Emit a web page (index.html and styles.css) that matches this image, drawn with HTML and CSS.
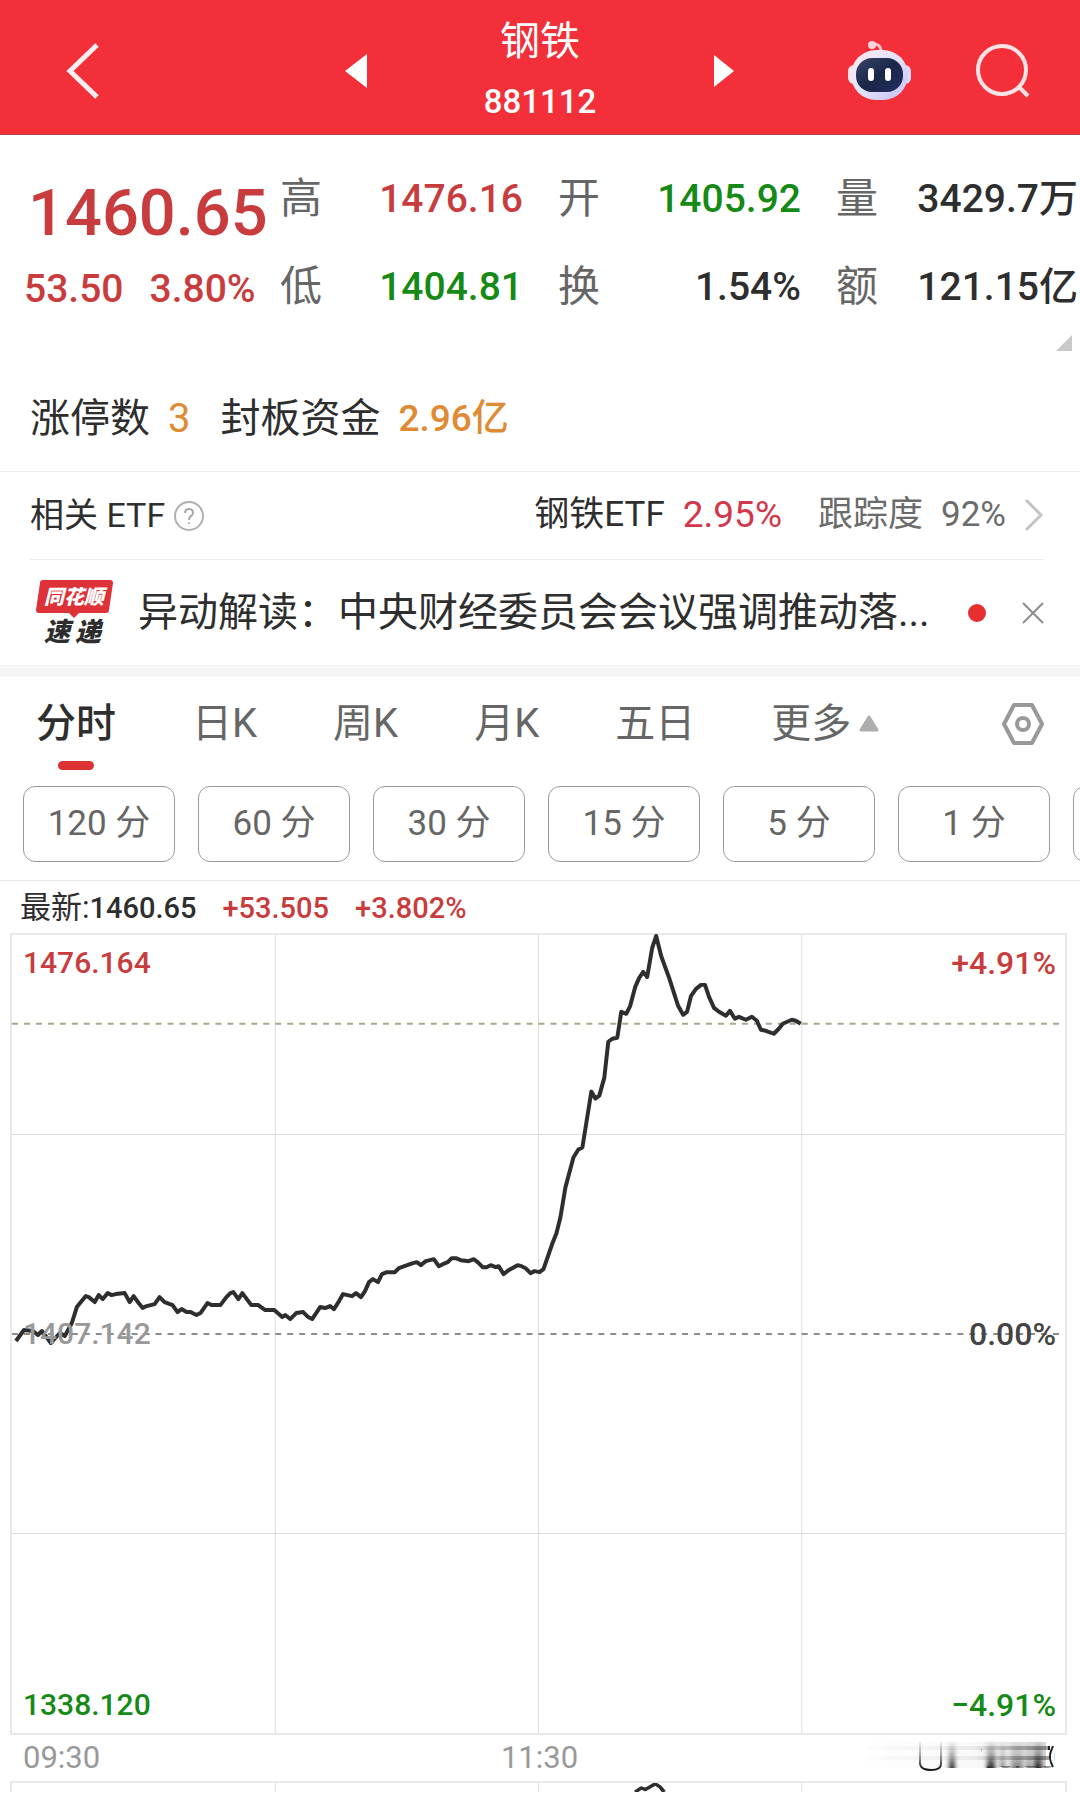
FILE: index.html
```html
<!DOCTYPE html>
<html lang="zh-CN">
<head>
  <meta charset="UTF-8">
  <meta name="viewport" content="width=device-width, initial-scale=1.0">
  <title>钢铁 881112</title>
  <link rel="stylesheet" href="styles.css">
</head>
<body>

<!-- Header -->
<header class="header">
  <button class="icon-btn back" type="button" aria-label="返回">
    <svg width="34" height="58" viewBox="0 0 34 58"><path d="M31 3 L4 29 L31 55" fill="none" stroke="#ffeff0" stroke-width="5"/></svg>
  </button>
  <div class="switcher">
    <button class="icon-btn" type="button" aria-label="上一个">
      <svg width="24" height="36" viewBox="0 0 24 36"><path d="M23 1 V35 L1 18 Z" fill="#fff"/></svg>
    </button>
    <div class="title">
      <h1>钢铁</h1>
      <p>881112</p>
    </div>
    <button class="icon-btn" type="button" aria-label="下一个">
      <svg width="24" height="36" viewBox="0 0 24 36"><path d="M2 2 V34 L22 18 Z" fill="#fff"/></svg>
    </button>
  </div>
  <div class="actions">
    <button class="icon-btn" type="button" aria-label="智能助手">
      <svg width="64" height="62" viewBox="0 0 64 62">
        <defs>
          <linearGradient id="shell" x1="0" y1="0" x2="1" y2="1">
            <stop offset="0" stop-color="#ffe9f0"/>
            <stop offset="0.5" stop-color="#e2e4fb"/>
            <stop offset="1" stop-color="#c3bdf3"/>
          </linearGradient>
          <linearGradient id="visor" x1="0" y1="0" x2="1" y2="1">
            <stop offset="0" stop-color="#39466a"/>
            <stop offset="0.5" stop-color="#1a2647"/>
            <stop offset="1" stop-color="#222d63"/>
          </linearGradient>
        </defs>
        <path d="M24 4 Q33 3 33 12" fill="none" stroke="#f9c9d2" stroke-width="3"/>
        <circle cx="24" cy="5" r="4" fill="#fbd3da"/>
        <rect x="0" y="25" width="12" height="19" rx="6" fill="#fbe0ea"/>
        <rect x="51" y="25" width="12" height="19" rx="6" fill="#e6d8f4"/>
        <rect x="3" y="10" width="57" height="50" rx="25" fill="url(#shell)"/>
        <rect x="8" y="18" width="47" height="34" rx="16" fill="url(#visor)"/>
        <rect x="20" y="28" width="6" height="13" rx="3" fill="#fff"/>
        <rect x="37" y="28" width="6" height="13" rx="3" fill="#fff"/>
      </svg>
    </button>
    <button class="icon-btn" type="button" aria-label="搜索">
      <svg width="54" height="56" viewBox="0 0 54 56"><circle cx="26" cy="27" r="24" fill="none" stroke="#ffe3e4" stroke-width="4"/><path d="M42 43 L52 53" stroke="#ffe3e4" stroke-width="4"/></svg>
    </button>
  </div>
</header>

<!-- Quote -->
<section class="quote">
  <div class="price up">
    <strong>1460.65</strong>
    <p><span>53.50</span><span>3.80%</span></p>
  </div>
  <dl class="stats">
    <div><dt>高</dt><dd class="up">1476.16</dd></div>
    <div><dt>开</dt><dd class="down">1405.92</dd></div>
    <div><dt>量</dt><dd>3429.7万</dd></div>
    <div><dt>低</dt><dd class="down">1404.81</dd></div>
    <div><dt>换</dt><dd>1.54%</dd></div>
    <div><dt>额</dt><dd>121.15亿</dd></div>
  </dl>
  <svg class="corner" width="16" height="16" viewBox="0 0 16 16"><path d="M16 0 V16 H0 Z" fill="#c9c9c9"/></svg>
</section>

<section class="limit">
  <span>涨停数</span><b>3</b>
  <span>封板资金</span><b class="money">2.96亿</b>
</section>

<!-- Related ETF -->
<section class="etf">
  <span class="etf-label">相关 ETF</span>
  <button class="icon-btn" type="button" aria-label="说明">
    <svg width="32" height="32" viewBox="0 0 32 32"><circle cx="16" cy="16" r="14" fill="none" stroke="#b0b0b0" stroke-width="2"/><path d="M12 13 Q12 9 16 9 Q20 9 20 13 Q20 15 18 16 Q16 17 16 20" fill="none" stroke="#a8a8a8" stroke-width="2"/><circle cx="16" cy="23" r="1" fill="#a8a8a8"/></svg>
  </button>
  <a class="etf-link" href="#etf">
    <span>钢铁ETF</span>
    <span class="etf-rate">2.95%</span>
    <span class="track">跟踪度</span>
    <span class="track">92%</span>
    <svg width="20" height="34" viewBox="0 0 20 34"><path d="M2 2 L17 17 L2 32" fill="none" stroke="#c4c4c4" stroke-width="3"/></svg>
  </a>
</section>

<!-- News -->
<section class="news">
  <svg class="news-logo" width="77" height="66" viewBox="0 0 77 66">
    <path d="M7 0 H74 Q77 0 77 3 L73 30 Q73 33 70 33 H43 L38 38 L33 33 H3 Q0 33 0 30 L4 3 Q4 0 7 0 Z" fill="#dc3238"/>
    <text x="8" y="24" class="logo-top">同花顺</text>
    <text x="8 39" y="61" class="logo-bottom">速递</text>
  </svg>
  <a class="news-text" href="#news">异动解读：中央财经委员会会议强调推动落...</a>
  <span class="dot"></span>
  <button class="icon-btn" type="button" aria-label="关闭">
    <svg width="22" height="22" viewBox="0 0 22 22"><path d="M1 1 L21 21 M21 1 L1 21" stroke="#8c8c8c" stroke-width="2"/></svg>
  </button>
</section>

<!-- Chart tabs -->
<nav class="tabs">
  <button class="tab active" type="button">分时</button>
  <button class="tab" type="button">日K</button>
  <button class="tab" type="button">周K</button>
  <button class="tab" type="button">月K</button>
  <button class="tab" type="button">五日</button>
  <button class="tab more" type="button">更多<svg width="20" height="17" viewBox="0 0 20 17"><path d="M10 2 L18 15 H2 Z" fill="#adadad" stroke="#adadad" stroke-width="3" stroke-linejoin="round"/></svg></button>
  <button class="icon-btn settings" type="button" aria-label="设置">
    <svg width="42" height="42" viewBox="0 0 42 42" fill="none" stroke="#999" stroke-width="4" stroke-linejoin="round"><path d="M12 2 H30 L40 21 L30 40 H12 L2 21 Z"/><circle cx="21" cy="21" r="6"/></svg>
  </button>
</nav>
<div class="periods">
  <button type="button">120 分</button>
  <button type="button">60 分</button>
  <button type="button">30 分</button>
  <button type="button">15 分</button>
  <button type="button">5 分</button>
  <button type="button">1 分</button>
  <button type="button" aria-label="更多周期"></button>
</div>

<!-- Chart -->
<main class="chart">
  <p class="latest"><span>最新:<b>1460.65</b></span><b class="up">+53.505</b><b class="up">+3.802%</b></p>
  <div class="plot">
    <svg viewBox="0 0 1056 800" preserveAspectRatio="none">
      <path class="grid" d="M264 0 V800 M528 0 V800 M792 0 V800 M0 200 H1056 M0 600 H1056"/>
      <path class="dash now" d="M0 89 H1056"/>
      <path class="dash" d="M0 400 H1056"/>
      <polyline class="line" points="4,407 12,396 21,397 26,401 30,397 39,409 48,399 53,402 60,389 65,373 74,362 77,363 83,368 87,361 91,365 96,359 100,361 104,360 113,359 118,368 122,362 127,369 131,374 135,372 143,370 148,363 153,368 161,371 166,378 170,375 175,378 179,378 185,381 189,379 196,369 200,371 209,371 215,363 219,359 222,358 227,365 231,359 240,371 247,371 254,376 263,376 271,383 274,381 279,385 285,379 292,378 297,383 301,385 309,373 314,374 319,372 323,375 328,367 332,360 341,362 345,359 350,363 354,357 358,348 362,345 367,348 371,340 376,338 384,338 388,334 402,329 406,328 410,331 415,327 423,325 428,332 432,330 437,328 441,324 445,324 450,326 458,327 463,325 467,328 472,333 476,333 480,331 485,333 488,332 493,340 498,336 507,331 511,332 515,334 520,339 524,337 529,338 533,335 542,309 546,299 550,283 555,253 563,223 568,215 572,213 581,157 585,164 589,161 594,143 598,107 602,104 607,103 611,77 616,79 620,71 625,52 629,43 633,37 637,42 642,13 646,1 651,21 659,43 668,71 673,80 677,77 681,61 686,54 691,50 695,50 699,62 704,73 709,77 716,81 720,76 725,84 729,82 736,85 742,82 747,86 751,95 756,96 764,99 769,94 773,89 782,85 786,86 791,89"/>
    </svg>
    <div class="scale">
      <p class="up"><span>1476.164</span><span>+4.91%</span></p>
      <p class="base"><span>1407.142</span><span>0.00%</span></p>
      <p class="down"><span>1338.120</span><span>−4.91%</span></p>
    </div>
  </div>
  <p class="times">
    <span>09:30</span>
    <span>11:30</span>
    <span class="end">15:00
      <svg class="smear" width="200" height="36" viewBox="0 0 200 36">
        <defs>
          <linearGradient id="fall" gradientUnits="userSpaceOnUse" x1="0" y1="2" x2="0" y2="31">
            <stop offset="0" stop-color="#000" stop-opacity="0"/>
            <stop offset="0.6" stop-color="#000" stop-opacity="0.4"/>
            <stop offset="1" stop-color="#000" stop-opacity="0.9"/>
          </linearGradient>
          <linearGradient id="band" gradientUnits="userSpaceOnUse" x1="0" y1="0" x2="196" y2="0">
            <stop offset="0" stop-color="#000" stop-opacity="0"/>
            <stop offset="0.6" stop-color="#000" stop-opacity="0.06"/>
            <stop offset="1" stop-color="#000" stop-opacity="0.4"/>
          </linearGradient>
          <filter id="soft" x="-20%" y="-20%" width="140%" height="140%"><feGaussianBlur stdDeviation="2 0"/></filter>
        </defs>
        <rect x="126" y="0" width="72" height="28" fill="#fff"/>
        <path d="M0 4 H190 V30 H0 Z" fill="url(#band)" opacity="0.4"/>
        <path d="M0 8 H193 V12 H0 Z M0 18 H193 V22 H0 Z" fill="url(#band)"/>
        <path d="M93 2 H99 V30 H93 Z M131 2 H139 V30 H131 Z M178 2 H186 V30 H178 Z" fill="url(#fall)" filter="url(#soft)"/>
        <path d="M144 2 H149 V29 H144 Z M155 2 H167 V30 H155 Z M171 2 H175 V29 H171 Z" fill="url(#fall)" filter="url(#soft)" opacity="0.5"/>
        <path d="M64 4 V26 Q65 32 75 32 Q85 32 85 26 V4" fill="none" stroke="url(#fall)" stroke-width="2"/>
        <path d="M193 8 V12 M197 8 L195 13 Q192 20 197 29" fill="none" stroke="#222" stroke-width="2"/>
      </svg>
    </span>
  </p>
  <div class="volume">
    <svg viewBox="0 0 1056 11" preserveAspectRatio="none">
      <path class="grid" d="M264 0 V11 M528 0 V11 M792 0 V11"/>
      <polyline class="line" points="625,11 631,6 635,8 645,1 650,5 654,11"/>
    </svg>
  </div>
</main>

</body>
</html>
```
FILE: styles.css
```css
* {
  box-sizing: border-box;
}
body {
  margin: 0;
  background-color: #fff;
  color: #2e2e2e;
  font-family: Roboto, "Noto Sans CJK SC", sans-serif;
  line-height: 1.2;
  overflow-x: hidden;
}
h1, p, dl, dd {
  margin: 0;
}
button {
  padding: 0;
  border: none;
  background: none;
  color: inherit;
  font-family: inherit;
  line-height: inherit;
  cursor: pointer;
}
a {
  color: inherit;
  text-decoration: none;
}
svg {
  display: block;
}
.up {
  color: #c93c3e;
}
.down {
  color: #168a16;
}

/* header */
.header {
  display: grid;
  grid-template-columns: 1fr 392px 1fr;
  align-items: center;
  height: 135px;
  padding: 8px 50px 0;
  background-color: #f32f39;
  border-bottom: 1px solid #b0464c;
  color: #fff;
}
.back {
  margin-left: 16px;
}
.switcher {
  display: flex;
  justify-content: space-between;
  align-items: center;
}
.title {
  padding-top: 2px;
  text-align: center;
}
.title h1 {
  font-size: 40px;
  font-weight: 400;
  line-height: 60px;
}
.title p {
  font-size: 33px;
  font-weight: 500;
  line-height: 60px;
}
.actions {
  display: flex;
  justify-content: flex-end;
  align-items: center;
  gap: 64px;
}

/* quote */
.quote {
  position: relative;
  display: flex;
  height: 232px;
  padding: 20px 2px 0 24px;
}
.price {
  width: 256px;
}
.price strong {
  display: block;
  padding-left: 4px;
  font-size: 65px;
  font-weight: 500;
  line-height: 116px;
}
.price p {
  display: flex;
  gap: 26px;
  font-size: 39px;
  font-weight: 500;
  line-height: 36px;
}
.stats {
  flex: 1;
  display: grid;
  grid-template-columns: 243px 243px 1fr;
  grid-auto-rows: 88px;
  column-gap: 35px;
}
.stats div {
  display: flex;
  justify-content: space-between;
  align-items: center;
}
.stats dt {
  color: #666;
  font-size: 42px;
}
.stats dd {
  font-size: 39px;
  font-weight: 500;
  white-space: nowrap;
}
.corner {
  position: absolute;
  right: 8px;
  bottom: 16px;
}
.limit {
  display: flex;
  align-items: center;
  height: 105px;
  padding: 0 30px;
  border-bottom: 1px solid #ececec;
  font-size: 40px;
}
.limit b {
  margin: 0 30px 0 18px;
  color: #e08a33;
  font-weight: 400;
}
.limit .money {
  font-size: 37px;
  font-weight: 500;
}

/* related ETF */
.etf {
  display: flex;
  align-items: center;
  height: 88px;
  margin: 0 36px 0 30px;
  border-bottom: 1px solid #ececec;
  font-size: 34px;
}
.etf .icon-btn {
  margin-left: 8px;
}
.etf-link {
  display: flex;
  align-items: center;
  margin-left: auto;
  font-size: 35px;
}
.etf-rate {
  margin: 0 36px 0 18px;
  color: #d2384c;
  font-size: 37px;
}
.track {
  margin-right: 18px;
  color: #6b6b6b;
}

/* news */
.news {
  display: flex;
  align-items: center;
  height: 117px;
  padding: 0 36px;
  border-bottom: 12px solid #f5f5f5;
}
.news-logo {
  margin-right: 25px;
  font-style: italic;
  font-weight: 900;
}
.logo-top {
  fill: #fff;
  font-size: 20px;
}
.logo-bottom {
  fill: #2e2e2e;
  font-size: 26px;
}
.news-text {
  flex: 1;
  font-size: 40px;
  white-space: nowrap;
}
.dot {
  width: 18px;
  height: 18px;
  margin-right: 36px;
  border-radius: 50%;
  background-color: #e5302f;
}

/* tabs */
.tabs {
  display: flex;
  align-items: center;
  height: 93px;
  padding: 0 36px;
}
.tab {
  position: relative;
  margin-right: 76px;
  color: #666;
  font-size: 40px;
  line-height: 93px;
  white-space: nowrap;
}
.tab.active {
  color: #2e2e2e;
  font-weight: 500;
}
.tab.active::after {
  content: "";
  position: absolute;
  left: 50%;
  bottom: 0;
  width: 36px;
  height: 9px;
  margin-left: -18px;
  border-radius: 5px;
  background-color: #dc3232;
}
.more {
  display: flex;
  align-items: center;
  gap: 8px;
}
.settings {
  margin-left: auto;
}
.periods {
  display: flex;
  gap: 23px;
  height: 111px;
  padding: 16px 0 18px 23px;
  border-bottom: 1px solid #e6e6e6;
  overflow: hidden;
}
.periods button {
  flex: 0 0 152px;
  border: 1px solid #999;
  border-radius: 12px;
  color: #666;
  font-size: 35px;
}

/* chart */
.chart {
  padding: 0 13px 0 10px;
}
.latest {
  display: flex;
  align-items: baseline;
  gap: 26px;
  padding: 2px 0 0 10px;
  font-size: 31px;
  line-height: 50px;
}
.latest b {
  font-size: 29px;
  font-weight: 500;
}
.plot {
  position: relative;
  border: 2px solid #e8e8e8;
}
.plot svg {
  width: 100%;
  height: 798px;
  overflow: visible;
}
.grid {
  fill: none;
  stroke: #dcdcdc;
  stroke-width: 1;
}
.dash {
  fill: none;
  stroke: #8c8c8c;
  stroke-width: 2;
  stroke-dasharray: 6 6;
}
.now {
  stroke: #a8a890;
}
.line {
  fill: none;
  stroke: #2e2e2e;
  stroke-width: 4;
  stroke-linejoin: round;
}
.scale {
  position: absolute;
  inset: 0;
  display: flex;
  flex-direction: column;
  justify-content: space-between;
  padding: 4px 9px 4px 11px;
  font-size: 32px;
  font-weight: 500;
  line-height: 48px;
}
.scale p {
  display: flex;
  justify-content: space-between;
}
.scale span:first-child {
  font-size: 30px;
}
.base {
  color: #444;
}
.base span:first-child {
  color: #999;
}
.times {
  display: grid;
  grid-template-columns: 1fr 1fr 1fr;
  padding: 0 11px 0 13px;
  color: #999;
  font-size: 31px;
  line-height: 46px;
  text-align: center;
}
.times span:first-child {
  text-align: left;
}
.times .end {
  position: relative;
  text-align: right;
}
.smear {
  position: absolute;
  right: 0;
  top: 3px;
}
.volume {
  border: 2px solid #e8e8e8;
  border-bottom: none;
}
.volume svg {
  width: 100%;
  height: 9px;
}
```
